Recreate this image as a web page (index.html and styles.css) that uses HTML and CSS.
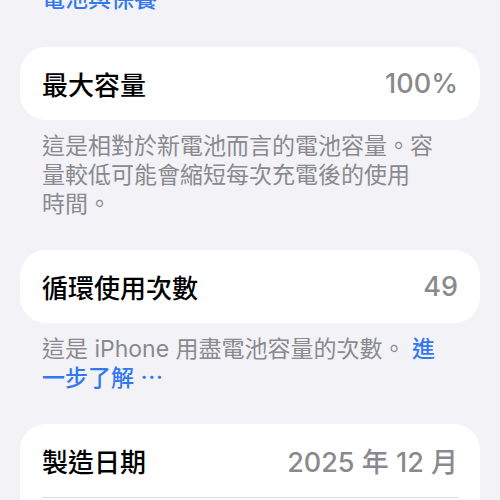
FILE: index.html
```html
<!DOCTYPE html>
<html lang="zh-Hant">
<head>
    <meta charset="UTF-8">
    <meta name="viewport" content="width=device-width, initial-scale=1.0">
    <title>電池健康度</title>
    <link rel="stylesheet" href="styles.css">
</head>
<body>
    <div class="page">
        <p class="note top-note"><a href="#">電池與保養⋯</a></p>

        <div class="card">
            <div class="row">
                <span class="label">最大容量</span>
                <span class="value">100%</span>
            </div>
        </div>
        <p class="note">這是相對於新電池而言的電池容量。容量較低可能會縮短每次充電後的使用<span class="keep">時間</span>。</p>

        <div class="card">
            <div class="row">
                <span class="label">循環使用次數</span>
                <span class="value">49</span>
            </div>
        </div>
        <p class="note">這是 iPhone 用盡電池容量的次數。 <a href="#">進<br>一步了解 ⋯</a></p>

        <div class="card">
            <div class="row">
                <span class="label">製造日期</span>
                <span class="value">2025 年 12 月</span>
            </div>
            <div class="row">
                <span class="label">首次使用</span>
                <span class="value">2025 年 12 月</span>
            </div>
        </div>
    </div>
</body>
</html>
```

FILE: styles.css
```css
body {
    margin: 0;
    background-color: #f2f2f7;
    font-family: Inter, "Noto Sans CJK TC", sans-serif;
    overflow: hidden;
}
.page {
    padding: 0 20px;
}
.note {
    margin: 12px 0 31px;
    padding: 0 22px;
    font-size: 23px;
    line-height: 29px;
    color: #8a8a8e;
    width: 400px;
}
.top-note {
    margin-top: -15px;
    margin-bottom: 33px;
}
.note a {
    color: #3478f0;
    text-decoration: none;
    font-weight: 500;
}
.keep {
    white-space: nowrap;
}
.card {
    background: white;
    border-radius: 26px;
}
.row {
    display: flex;
    justify-content: space-between;
    align-items: center;
    height: 73px;
    margin: 0 22px;
    border-bottom: 1px solid #dcdce0;
    font-size: 26px;
}
.row:last-child {
    border-bottom: none;
}
.label {
    color: #000;
    font-weight: 500;
}
.value {
    color: #8a8a8e;
    font-weight: 500;
    font-size: 27px;
}
```
